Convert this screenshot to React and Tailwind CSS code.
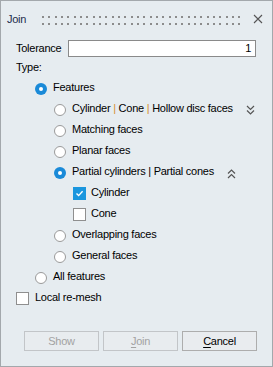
import React from "react";

const font = { fontFamily: '"Liberation Sans", Arial, sans-serif' };

const Radio = ({ checked }) =>
  checked ? (
    <span className="flex h-[12px] w-[12px] shrink-0 items-center justify-center rounded-full bg-[#1a8ad8]">
      <span className="h-[4px] w-[4px] rounded-full bg-white" />
    </span>
  ) : (
    <span className="h-[12px] w-[12px] shrink-0 rounded-full border border-[#9a9a9a] bg-white" />
  );

const Check = ({ checked }) =>
  checked ? (
    <span className="flex h-[13px] w-[13px] shrink-0 items-center justify-center bg-[#1a96de]">
      <svg width="9" height="9" viewBox="0 0 9 9">
        <path d="M1.5 4.6 L3.6 6.6 L7.6 2.2" fill="none" stroke="#fff" strokeWidth="1.4" />
      </svg>
    </span>
  ) : (
    <span className="h-[13px] w-[13px] shrink-0 border border-[#8f8f8f] bg-white" />
  );

const Chevrons = ({ up }) => (
  <svg width="9" height="10" viewBox="0 0 9 10" className="shrink-0">
    <path
      d={up ? "M1 4.5 L4.5 1 L8 4.5 M1 9 L4.5 5.5 L8 9" : "M1 1 L4.5 4.5 L8 1 M1 5.5 L4.5 9 L8 5.5"}
      fill="none"
      stroke="#555"
      strokeWidth="1.2"
    />
  </svg>
);

const Row = ({ indent, control, children, chevron }) => (
  <div className={`flex h-[21px] items-center ${indent}`}>
    {control}
    <span className="pb-[2px] pl-[6px] whitespace-nowrap">{children}</span>
    {chevron}
  </div>
);

const Pipe = ({ orange }) => (
  <span className={orange ? "text-[#d68f2e]" : ""}> | </span>
);

export default function App() {
  const dots = [];
  for (let i = 0; i < 32; i++) {
    const x = 1 + i * 6.33;
    dots.push(<rect key={`a${i}`} x={Math.round(x)} y="0" width="2" height="2" fill="#8c8c8c" />);
    dots.push(<rect key={`b${i}`} x={Math.round(x)} y="7" width="2" height="2" fill="#8c8c8c" />);
  }

  return (
    <div
      style={font}
      className="flex h-[367px] w-[273px] flex-col border border-[#a3a8ac] bg-[#e6ecf0] text-[11px] tracking-[-0.25px] text-black"
    >
      {/* title bar */}
      <div className="flex h-[36px] items-center pl-[6px] pr-[9px]">
        <span className="w-[34px] text-[#1d2c4c]">Join</span>
        <svg width="204" height="9" viewBox="0 0 204 9" className="mt-[2px]">
          {dots}
        </svg>
        <div className="ml-auto flex h-[10px] w-[10px] items-center justify-center">
          <svg width="10" height="10" viewBox="0 0 10 10">
            <path d="M1 1 L9 9 M9 1 L1 9" stroke="#555" strokeWidth="1.1" />
          </svg>
        </div>
      </div>

      <div className="flex flex-col pl-[15px]">
        {/* tolerance */}
        <div className="mt-[3px] flex h-[17px] items-center">
          <span className="w-[52px]">Tolerance</span>
          <div className="flex h-[17px] w-[188px] items-center justify-end border border-[#8a8a8a] bg-white pr-[4px]">
            1
          </div>
        </div>

        <div className="flex h-[21px] items-center">Type:</div>

        <Row indent="pl-[19px]" control={<Radio checked />}>Features</Row>
        <Row indent="pl-[38px]" control={<Radio />} chevron={<span className="ml-[13px]"><Chevrons /></span>}>
          Cylinder<Pipe orange />Cone<Pipe orange />Hollow disc faces
        </Row>
        <Row indent="pl-[38px]" control={<Radio />}>Matching faces</Row>
        <Row indent="pl-[38px]" control={<Radio />}>Planar faces</Row>
        <Row indent="pl-[38px]" control={<Radio checked />} chevron={<span className="ml-[13px] mt-[2px]"><Chevrons up /></span>}>
          Partial cylinders<Pipe />Partial cones
        </Row>
        <Row indent="pl-[57px]" control={<Check checked />}>
          <span className="-ml-[1px]">Cylinder</span>
        </Row>
        <Row indent="pl-[57px]" control={<Check />}>
          <span className="-ml-[1px]">Cone</span>
        </Row>
        <Row indent="pl-[38px]" control={<Radio />}>Overlapping faces</Row>
        <Row indent="pl-[38px]" control={<Radio />}>General faces</Row>
        <Row indent="pl-[19px]" control={<Radio />}>All features</Row>
        <Row indent="pl-[0px]" control={<Check />}>Local re-mesh</Row>

        {/* buttons */}
        <div className="ml-[8px] mt-[22px] flex gap-[4px]">
          <button className="flex h-[20px] w-[75px] items-center justify-center border border-[#c2c5c8] bg-[#e8ecef] text-[#a2a2a2]">
            Show
          </button>
          <button className="flex h-[20px] w-[75px] items-center justify-center border border-[#c2c5c8] bg-[#e8ecef] text-[#a2a2a2]">
            <span className="underline underline-offset-2">J</span>oin
          </button>
          <button className="flex h-[20px] w-[75px] items-center justify-center border border-[#adadad] bg-[#e9ecef] text-black">
            <span className="underline underline-offset-2">C</span>ancel
          </button>
        </div>
      </div>
    </div>
  );
}
